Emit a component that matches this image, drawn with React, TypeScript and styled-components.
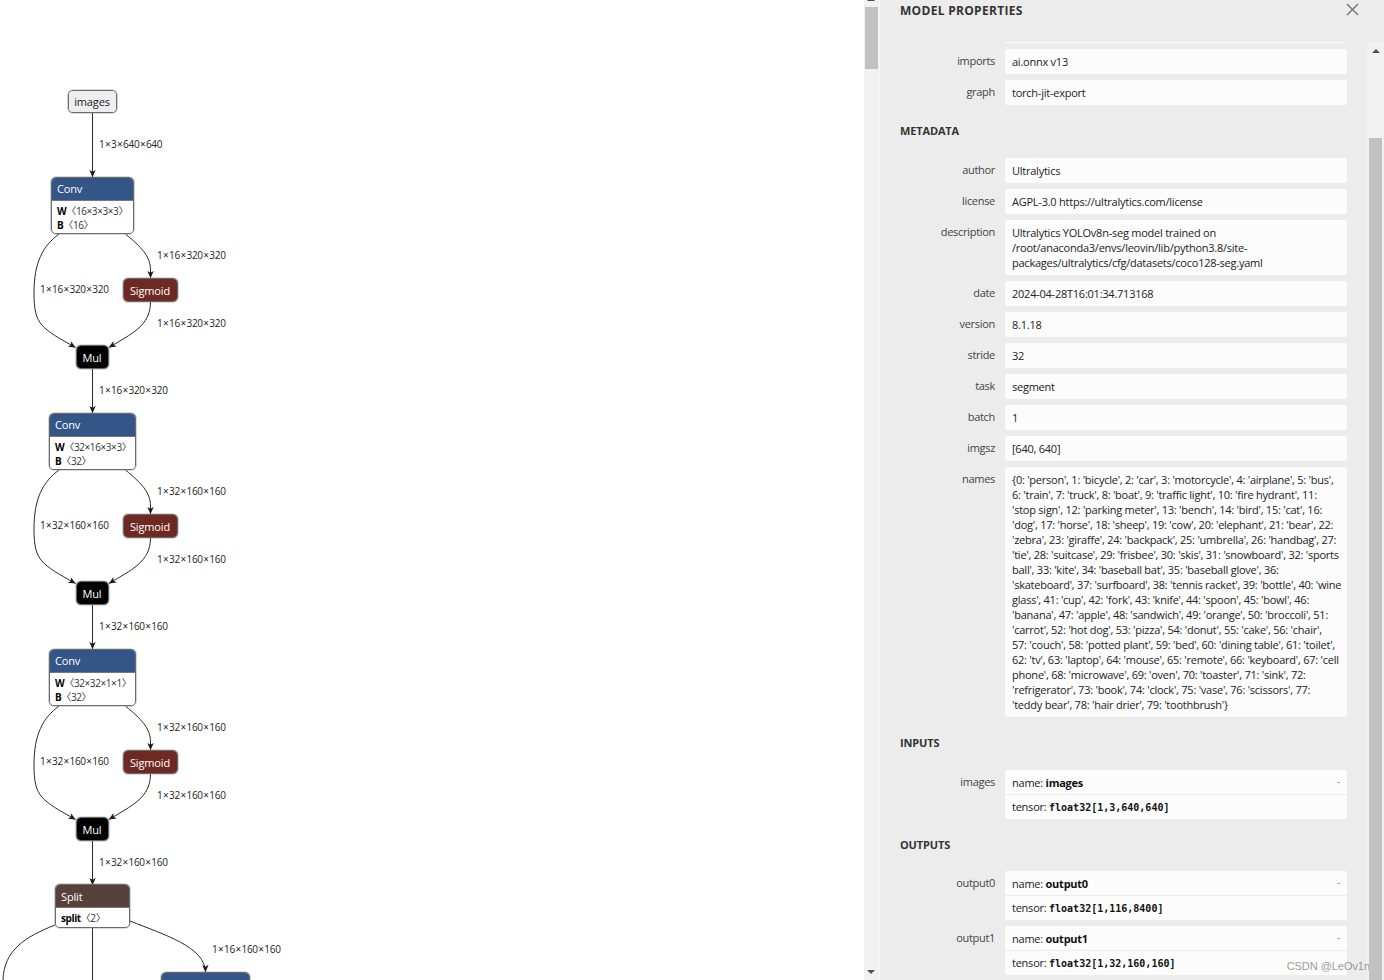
import React from "react";
import styled, { createGlobalStyle } from "styled-components";

const SANS = `"Open Sans", "Noto Sans", "Noto Sans CJK SC", sans-serif`;

const Global = createGlobalStyle`
  html, body { margin: 0; padding: 0; height: 980px; overflow: hidden; background: #fff; font-family: ${SANS}; }
  * { box-sizing: border-box; }
`;

const Page = styled.div`
  display: flex;
  width: 1384px;
  height: 980px;
  overflow: hidden;
`;

const Canvas = styled.div`
  position: relative;
  flex: 0 0 864px;
  height: 980px;
  overflow: hidden;
  background: #fff;
`;

const Edges = styled.svg`
  position: absolute;
  left: 0;
  top: 0;
`;

const EdgeLabel = styled.div<{ $x: number; $y: number }>`
  position: absolute;
  left: ${(p) => p.$x}px;
  top: ${(p) => p.$y - 7.5}px;
  height: 14px;
  font-size: 10px;
  line-height: 14px;
  color: #222;
  white-space: nowrap;
  letter-spacing: -0.3px;
`;

const Cross = styled.span`
  margin: 0 0.6px;
`;

const Node = styled.div<{ $x: number; $y: number; $w: number; $h: number }>`
  position: absolute;
  left: ${(p) => p.$x}px;
  top: ${(p) => p.$y}px;
  width: ${(p) => p.$w}px;
  height: ${(p) => p.$h}px;
  border: 1px solid #6a6a6a;
  box-shadow: 0 0 0 0.6px rgba(120, 120, 120, 0.55);
  border-radius: 5px;
  overflow: hidden;
  background: #fff;
  display: flex;
  flex-direction: column;
`;

const NodeTitle = styled.div<{ $bg: string; $center?: boolean; $dark?: boolean; $nudge?: boolean }>`
  flex: ${(p) => (p.$center ? "1" : "0 0 22px")};
  display: flex;
  align-items: center;
  justify-content: ${(p) => (p.$center ? "center" : "flex-start")};
  padding: ${(p) => (p.$center ? "1px 1px 0 0" : p.$nudge ? "2px 0 0 5px" : "0 0 0 5px")};
  background: ${(p) => p.$bg};
  color: ${(p) => (p.$dark ? "#222" : "#fff")};
  font-size: 11px;
  line-height: 14px;
  letter-spacing: -0.15px;
`;

const NodeBody = styled.div`
  flex: 1;
  padding: 3px 5px 0;
  background: #fff;
  border-top: 1px solid #777;
  font-size: 10px;
  line-height: 14px;
  letter-spacing: -0.4px;
  color: #333;
`;

const Attr = styled.div`
  white-space: nowrap;
`;

const AttrKey = styled.b`
  color: #000;
  font-weight: 700;
`;

const Panel = styled.div`
  position: relative;
  flex: 0 0 520px;
  height: 980px;
  display: flex;
  background: #ececec;
  overflow: hidden;
`;

const Track = styled.div<{ $w: number }>`
  flex: 0 0 ${(p) => p.$w}px;
  display: flex;
  flex-direction: column;
  align-items: center;
  background: #f1f1f1;
`;

const LeftTrack = styled(Track)`
  border-right: 1px solid #f7f7f7;
  height: 980px;
  padding-right: 1px;
`;

const ArrowUp = styled.div<{ $mt: number }>`
  flex: none;
  width: 0;
  height: 0;
  margin-top: ${(p) => p.$mt}px;
  border-left: 4px solid transparent;
  border-right: 4px solid transparent;
  border-bottom: 4px solid #505050;
`;

const ArrowDown = styled.div`
  flex: none;
  width: 0;
  height: 0;
  margin-top: auto;
  margin-bottom: 6px;
  border-left: 4px solid transparent;
  border-right: 4px solid transparent;
  border-top: 4px solid #505050;
`;

const Thumb = styled.div<{ $h: number; $mt?: number; $auto?: boolean }>`
  position: relative;
  z-index: 2;
  flex: none;
  width: 13px;
  height: ${(p) => p.$h}px;
  margin-top: ${(p) => (p.$auto ? "auto" : `${p.$mt}px`)};
  background: #c1c1c1;
`;

const Sheet = styled.div`
  flex: 1;
  min-width: 0;
  display: flex;
  flex-direction: column;
`;

const Header = styled.div`
  flex: 0 0 42px;
  display: flex;
  justify-content: space-between;
  padding: 3px 25px 0 20px;
`;

const Heading = styled.div`
  font-size: 12px;
  line-height: 15px;
  font-weight: 700;
  color: #333;
  letter-spacing: 0.3px;
`;

const Close = styled.svg`
  flex: none;
`;

const Scroller = styled.div`
  position: relative;
  flex: 1;
  min-height: 0;
  display: flex;
  overflow: hidden;
`;

const Content = styled.div`
  flex: 1;
  min-width: 0;
  padding: 0 20px;
  overflow: hidden;
`;

const ClippedBox = styled.div`
  height: 1px;
  margin: 0 2px 6px 105px;
  background: #fcfcfc;
`;

const Section = styled.div<{ $tight?: boolean }>`
  padding: 12px 0 ${(p) => (p.$tight ? 19 : 20)}px;
  font-size: 11px;
  line-height: 15px;
  font-weight: 700;
  letter-spacing: -0.15px;
  color: #333;
`;

const Row = styled.div`
  display: flex;
  margin-bottom: 6px;
`;

const RowLabel = styled.div`
  flex: 0 0 105px;
  padding: 4px 10px 0 0;
  text-align: right;
  font-size: 11px;
  line-height: 15px;
  letter-spacing: -0.3px;
  color: #444;
`;

const Value = styled.div`
  flex: 1;
  min-width: 0;
  padding: 5px 7px;
  background: #fcfcfc;
  border-radius: 2px;
  font-size: 11px;
  line-height: 15px;
  letter-spacing: -0.24px;
  color: #222;
  white-space: pre;
`;

const Stack = styled.div`
  flex: 1;
  min-width: 0;
  background: #fcfcfc;
  border-radius: 2px;
`;

const StackName = styled.div`
  display: flex;
  justify-content: space-between;
  height: 25px;
  padding: 5px 7px 4px;
  border-bottom: 1px solid #ececec;
  font-size: 11px;
  line-height: 15px;
  letter-spacing: -0.24px;
  color: #222;
`;

const StackType = styled.div`
  height: 24px;
  padding: 4px 7px 5px;
  font-size: 11px;
  line-height: 15px;
  letter-spacing: -0.24px;
  color: #222;
`;

const Strong = styled.b`
  font-weight: 700;
  color: #111;
`;

const Mono = styled.b`
  font-family: "DejaVu Sans Mono", "Liberation Mono", monospace;
  font-size: 10px;
  font-weight: 700;
  letter-spacing: 0;
  color: #111;
`;

const Expander = styled.span`
  color: #888;
  font-size: 10px;
  line-height: 13px;
`;

const Watermark = styled.div`
  position: absolute;
  z-index: 1;
  right: 14px;
  bottom: 7px;
  font-family: "Liberation Sans", sans-serif;
  font-size: 11px;
  line-height: 14px;
  letter-spacing: -0.05px;
  color: rgba(120, 120, 120, 0.75);
  white-space: nowrap;
`;

const BLOCKS = [
  { dy: 0, x: 51, w: 83, w1: "16×3×3×3", b: "16", shape: "1×16×320×320" },
  { dy: 236, x: 49, w: 87, w1: "32×16×3×3", b: "32", shape: "1×32×160×160" },
  { dy: 472, x: 49, w: 87, w1: "32×32×1×1", b: "32", shape: "1×32×160×160" },
];

const BLUE = "#335588";
const RED = "#6e2a22";
const BROWN = "#59413b";

const NAMES = `{0: 'person', 1: 'bicycle', 2: 'car', 3: 'motorcycle', 4: 'airplane', 5: 'bus',
6: 'train', 7: 'truck', 8: 'boat', 9: 'traffic light', 10: 'fire hydrant', 11:
'stop sign', 12: 'parking meter', 13: 'bench', 14: 'bird', 15: 'cat', 16:
'dog', 17: 'horse', 18: 'sheep', 19: 'cow', 20: 'elephant', 21: 'bear', 22:
'zebra', 23: 'giraffe', 24: 'backpack', 25: 'umbrella', 26: 'handbag', 27:
'tie', 28: 'suitcase', 29: 'frisbee', 30: 'skis', 31: 'snowboard', 32: 'sports
ball', 33: 'kite', 34: 'baseball bat', 35: 'baseball glove', 36:
'skateboard', 37: 'surfboard', 38: 'tennis racket', 39: 'bottle', 40: 'wine
glass', 41: 'cup', 42: 'fork', 43: 'knife', 44: 'spoon', 45: 'bowl', 46:
'banana', 47: 'apple', 48: 'sandwich', 49: 'orange', 50: 'broccoli', 51:
'carrot', 52: 'hot dog', 53: 'pizza', 54: 'donut', 55: 'cake', 56: 'chair',
57: 'couch', 58: 'potted plant', 59: 'bed', 60: 'dining table', 61: 'toilet',
62: 'tv', 63: 'laptop', 64: 'mouse', 65: 'remote', 66: 'keyboard', 67: 'cell
phone', 68: 'microwave', 69: 'oven', 70: 'toaster', 71: 'sink', 72:
'refrigerator', 73: 'book', 74: 'clock', 75: 'vase', 76: 'scissors', 77:
'teddy bear', 78: 'hair drier', 79: 'toothbrush'}`;

const META: [string, string][] = [
  ["author", "Ultralytics"],
  ["license", "AGPL-3.0 https://ultralytics.com/license"],
  ["description", "Ultralytics YOLOv8n-seg model trained on\n/root/anaconda3/envs/leovin/lib/python3.8/site-\npackages/ultralytics/cfg/datasets/coco128-seg.yaml"],
  ["date", "2024-04-28T16:01:34.713168"],
  ["version", "8.1.18"],
  ["stride", "32"],
  ["task", "segment"],
  ["batch", "1"],
  ["imgsz", "[640, 640]"],
  ["names", NAMES],
];

function Shape({ text }: { text: string }) {
  const parts = text.split("×");
  return (
    <>
      {parts.map((p, i) => (
        <React.Fragment key={i}>
          {i > 0 && <Cross>×</Cross>}
          {p}
        </React.Fragment>
      ))}
    </>
  );
}

function Tensor({ label, type }: { label: string; type: string }) {
  return (
    <Row>
      <RowLabel>{label}</RowLabel>
      <Stack>
        <StackName>
          <span>
            name: <Strong>{label}</Strong>
          </span>
          <Expander>-</Expander>
        </StackName>
        <StackType>
          tensor: <Mono>{type}</Mono>
        </StackType>
      </Stack>
    </Row>
  );
}

function Graph() {
  return (
    <Canvas>
      <Edges width={864} height={980} viewBox="0 0 864 980" fill="none" stroke="#2a2a2a" strokeWidth={1}>
        <defs>
          <marker id="arrow" viewBox="0 0 8 8" refX="7.6" refY="4" markerWidth="8" markerHeight="8" markerUnits="userSpaceOnUse" orient="auto">
            <path d="M0.5 0.8 L7.8 4 L0.5 7.2 L2.4 4 Z" fill="#1a1a1a" stroke="none" />
          </marker>
        </defs>
        <path d="M92.5 113V177" markerEnd="url(#arrow)" />
        {BLOCKS.map((b) => (
          <g key={b.dy} transform={`translate(0 ${b.dy})`}>
            <path d="M59 234C43 246 34 262 34 293C34 325 41 328 75.500 347.500" markerEnd="url(#arrow)" />
            <path d="M125.500 234C141 247 150.500 256 150.500 270V278" markerEnd="url(#arrow)" />
            <path d="M150.500 302C150.500 326 131 334 109 347.500" markerEnd="url(#arrow)" />
            <path d="M92.500 369V413" markerEnd="url(#arrow)" />
          </g>
        ))}
        <path d="M55 925C25 937 4 950 3 980" />
        <path d="M92.500 928V980" />
        <path d="M130 921C165 935 205 947 205.500 972" markerEnd="url(#arrow)" />
      </Edges>

      <Node $x={68} $y={90} $w={49} $h={23}>
        <NodeTitle $bg="#eeeeee" $center $dark>images</NodeTitle>
      </Node>
      <EdgeLabel $x={99} $y={144.5}><Shape text="1×3×640×640" /></EdgeLabel>

      {BLOCKS.map((b) => (
        <React.Fragment key={b.dy}>
          <Node $x={b.x} $y={177 + b.dy} $w={b.w} $h={57}>
            <NodeTitle $bg={BLUE}>Conv</NodeTitle>
            <NodeBody>
              <Attr><AttrKey>W</AttrKey>〈{b.w1}〉</Attr>
              <Attr><AttrKey>B</AttrKey>〈{b.b}〉</Attr>
            </NodeBody>
          </Node>
          <Node $x={123} $y={278 + b.dy} $w={55} $h={24}>
            <NodeTitle $bg={RED} $center>Sigmoid</NodeTitle>
          </Node>
          <Node $x={76} $y={345 + b.dy} $w={33} $h={24}>
            <NodeTitle $bg="#000" $center>Mul</NodeTitle>
          </Node>
          <EdgeLabel $x={157} $y={255.5 + b.dy}><Shape text={b.shape} /></EdgeLabel>
          <EdgeLabel $x={40} $y={289.5 + b.dy}><Shape text={b.shape} /></EdgeLabel>
          <EdgeLabel $x={157} $y={323.5 + b.dy}><Shape text={b.shape} /></EdgeLabel>
          <EdgeLabel $x={99} $y={390.5 + b.dy}><Shape text={b.shape} /></EdgeLabel>
        </React.Fragment>
      ))}

      <Node $x={55} $y={884} $w={75} $h={44}>
        <NodeTitle $bg={BROWN} $nudge>Split</NodeTitle>
        <NodeBody>
          <Attr><AttrKey>split</AttrKey>〈2〉</Attr>
        </NodeBody>
      </Node>
      <EdgeLabel $x={212} $y={949.5}><Shape text="1×16×160×160" /></EdgeLabel>
      <Node $x={161} $y={972} $w={89} $h={57}>
        <NodeTitle $bg={BLUE} />
      </Node>
    </Canvas>
  );
}

function Properties() {
  return (
    <Panel>
      <LeftTrack $w={16}>
        <ArrowUp $mt={-3} />
        <Thumb $h={62} $mt={6} />
        <ArrowDown />
      </LeftTrack>
      <Sheet>
        <Header>
          <Heading>MODEL PROPERTIES</Heading>
          <Close width="13" height="13" viewBox="0 0 13 13" fill="none" stroke="#7b7b7b" strokeWidth="1.5">
            <path d="M1 1L12 12M12 1L1 12" />
          </Close>
        </Header>
        <Scroller>
          <Content>
            <ClippedBox />
            <Row><RowLabel>imports</RowLabel><Value>ai.onnx v13</Value></Row>
            <Row><RowLabel>graph</RowLabel><Value>torch-jit-export</Value></Row>
            <Section>METADATA</Section>
            {META.map(([k, v]) => (
              <Row key={k}><RowLabel>{k}</RowLabel><Value>{v}</Value></Row>
            ))}
            <Section>INPUTS</Section>
            <Tensor label="images" type="float32[1,3,640,640]" />
            <Section $tight>OUTPUTS</Section>
            <Tensor label="output0" type="float32[1,116,8400]" />
            <Tensor label="output1" type="float32[1,32,160,160]" />
          </Content>
          <Track $w={17}>
            <ArrowUp $mt={7} />
            <Thumb $h={842} $auto />
          </Track>
          <Watermark>CSDN @LeOv1n</Watermark>
        </Scroller>
      </Sheet>
    </Panel>
  );
}

export default function App() {
  return (
    <Page>
      <Global />
      <Graph />
      <Properties />
    </Page>
  );
}
